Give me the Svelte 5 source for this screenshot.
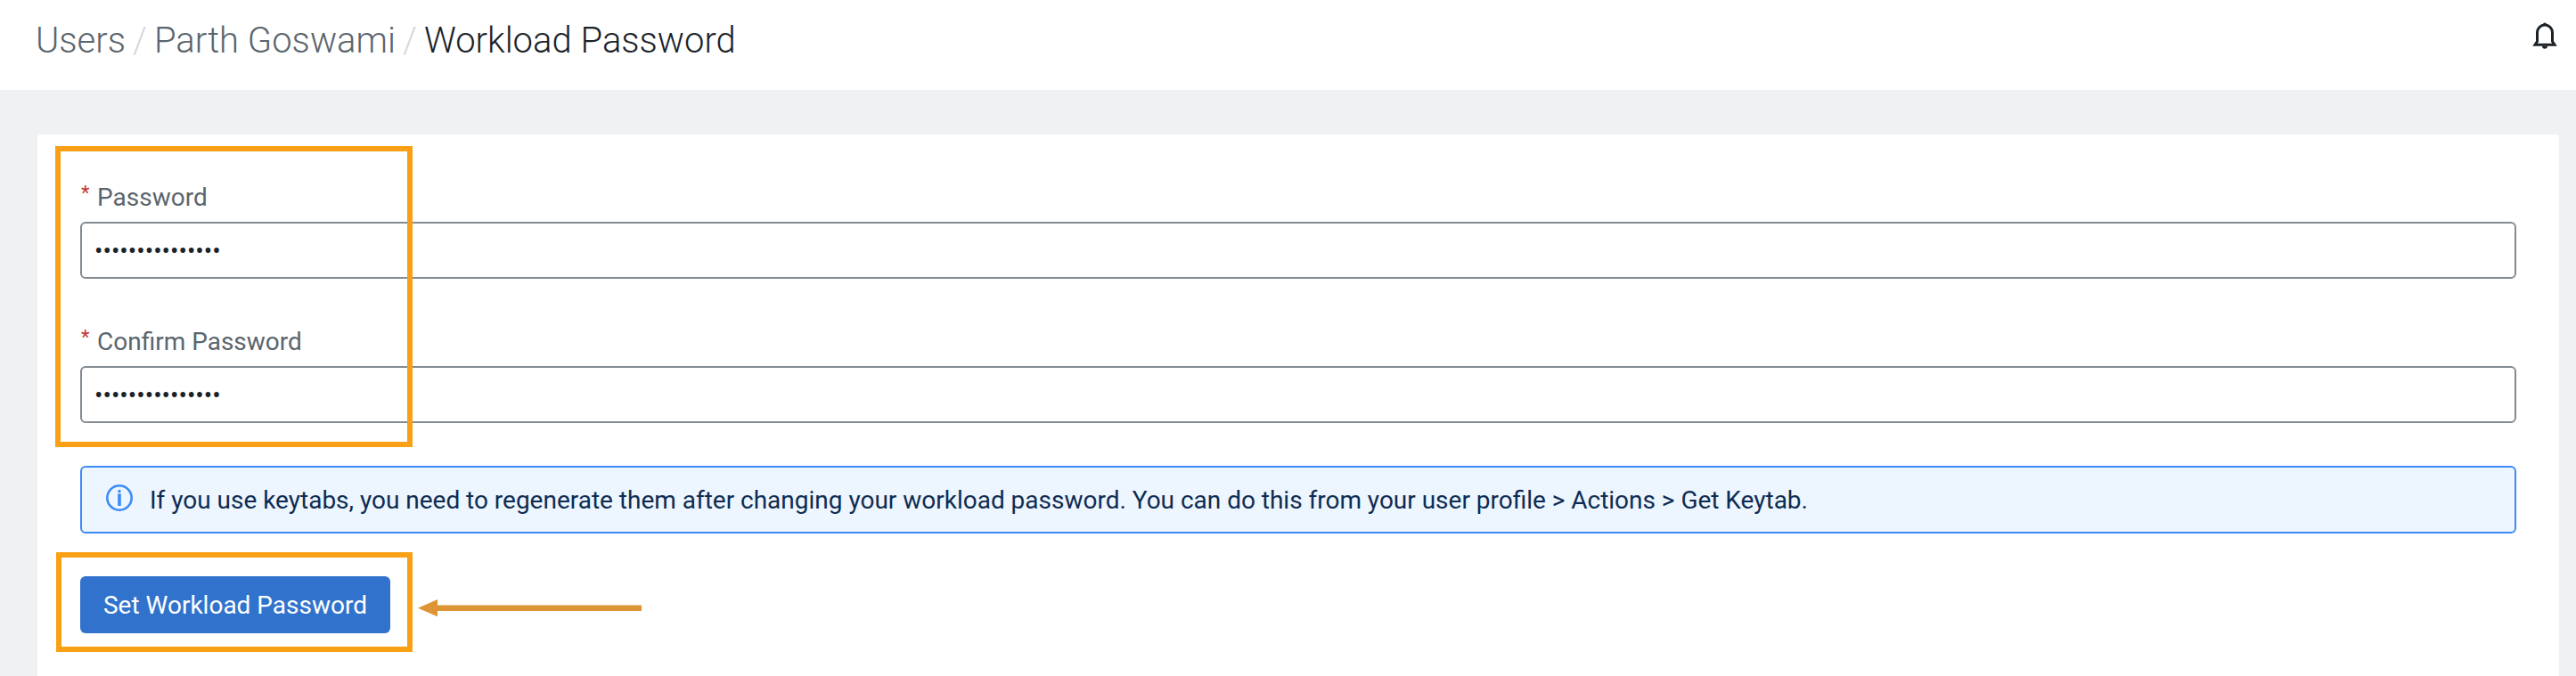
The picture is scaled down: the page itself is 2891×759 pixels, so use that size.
<script>
  let password = $state('workload-pass15');
  let confirmation = $state('workload-pass15');
</script>

<div class="page">
  <header>
    <nav class="breadcrumb" aria-label="Breadcrumb">
      <a class="crumb">Users</a><span class="sep">/</span><a class="crumb">Parth Goswami</a><span class="sep">/</span><span class="current">Workload Password</span>
    </nav>
    <svg class="bell" viewBox="0 0 28 32" width="28" height="32">
      <path d="M5.5 22.5V12.5a8.5 8.5 0 0 1 17 0v10l2.5 3.7H3z" fill="none" stroke="#1b2329" stroke-width="3" />
      <path d="M11.8 3.3a2.3 2.5 0 0 1 4.4 0zM11 27.8h6a3 3 0 0 1-6 0z" fill="#1b2329" />
    </svg>
  </header>

  <main>
    <form class="card">
      <div class="field">
        <label for="password"><span class="required">*</span>Password</label>
        <input id="password" type="password" bind:value={password} />
      </div>
      <div class="field">
        <label for="confirmation"><span class="required">*</span>Confirm Password</label>
        <input id="confirmation" type="password" bind:value={confirmation} />
      </div>
      <div class="alert">
        <svg viewBox="0 0 30 30" width="30" height="30">
          <circle cx="15" cy="15" r="13.7" fill="none" stroke="#3d8bf8" stroke-width="2.6" />
          <circle cx="15" cy="7.5" r="1.7" fill="#3d8bf8" />
          <path d="M15 10.3v13.7" stroke="#3d8bf8" stroke-width="3.6" />
        </svg>
        <span>If you use keytabs, you need to regenerate them after changing your workload password. You can do this from your user profile &gt; Actions &gt; Get Keytab.</span>
      </div>
      <button type="button">Set Workload Password</button>

      <div class="mark fields-mark"></div>
      <div class="mark button-mark"></div>
      <svg class="arrow" viewBox="0 0 252 20" width="252" height="20">
        <path d="M0 9.7 22 0v6.5h229v6.5H22v6.3z" fill="#dc9434" />
      </svg>
    </form>
  </main>
</div>

<style>
  :global(body) {
    margin: 0;
    overflow: hidden;
  }
  .page {
    display: flex;
    flex-direction: column;
    height: 759px;
    overflow: hidden;
    background: #f0f1f3;
    font-family: Roboto, sans-serif;
    font-size: 28px;
    color: #1b2329;
  }
  .page * {
    box-sizing: border-box;
  }
  header {
    display: flex;
    justify-content: space-between;
    align-items: flex-start;
    flex: none;
    height: 101px;
    padding: 21px 21px 0 40px;
    background: #fff;
  }
  .breadcrumb {
    font-size: 40px;
    font-weight: 300;
    line-height: 50px;
    white-space: nowrap;
  }
  .crumb {
    color: #5a656d;
  }
  .sep {
    margin: 0 8px;
    color: #d5d8dc;
  }
  .bell {
    margin-top: 3px;
  }
  main {
    flex: 1;
    padding: 50px 19px 0 42px;
  }
  .card {
    position: relative;
    display: flex;
    flex-direction: column;
    align-items: stretch;
    height: 640px;
    padding: 48px;
    background: #fff;
    border-radius: 4px;
  }
  .field {
    display: flex;
    flex-direction: column;
    height: 162px;
  }
  label {
    display: flex;
    height: 50px;
    line-height: 46px;
    color: #5a656d;
  }
  .required {
    width: 19px;
    padding-left: 1px;
    font-size: 22px;
    line-height: 36px;
    color: #c4342d;
  }
  input {
    width: 100%;
    height: 64px;
    padding: 0 14px;
    border: 2px solid #838b92;
    border-radius: 6px;
    outline: none;
    background: #fff;
    font: 28px Roboto, sans-serif;
    color: #1b2329;
  }
  .alert {
    display: flex;
    gap: 19px;
    height: 76px;
    padding: 19px 27px;
    border: 2px solid #3d8bf8;
    border-radius: 6px;
    background: #edf5fe;
    line-height: 36px;
    word-spacing: -0.07px;
    color: #0e2c52;
    white-space: nowrap;
  }
  button {
    align-self: flex-start;
    width: 348px;
    height: 64px;
    margin-top: 48px;
    padding: 0;
    border: 0;
    border-radius: 6px;
    background: #3173cc;
    font: 28px Roboto, sans-serif;
    color: #fff;
  }
  .mark {
    position: absolute;
    border: 6px solid #faa016;
    pointer-events: none;
  }
  .fields-mark {
    left: 20px;
    top: 13px;
    width: 401px;
    height: 338px;
  }
  .button-mark {
    left: 21px;
    top: 469px;
    width: 400px;
    height: 112px;
  }
  .arrow {
    position: absolute;
    left: 427px;
    top: 522px;
  }
</style>
